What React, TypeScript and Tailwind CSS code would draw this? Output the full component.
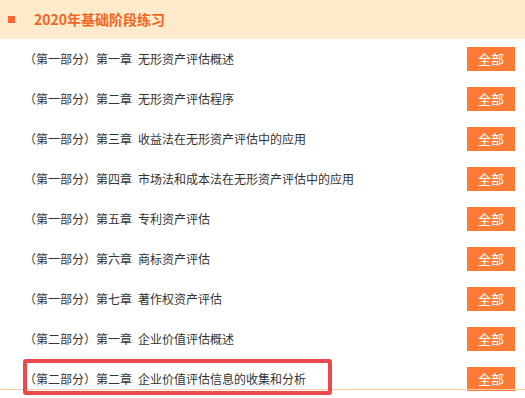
const chapters = [
  { part: '（第一部分）第一章', title: '无形资产评估概述' },
  { part: '（第一部分）第二章', title: '无形资产评估程序' },
  { part: '（第一部分）第三章', title: '收益法在无形资产评估中的应用' },
  { part: '（第一部分）第四章', title: '市场法和成本法在无形资产评估中的应用' },
  { part: '（第一部分）第五章', title: '专利资产评估' },
  { part: '（第一部分）第六章', title: '商标资产评估' },
  { part: '（第一部分）第七章', title: '著作权资产评估' },
  { part: '（第二部分）第一章', title: '企业价值评估概述' },
  { part: '（第二部分）第二章', title: '企业价值评估信息的收集和分析' },
];

const font = { fontFamily: '"Noto Sans CJK SC", "Liberation Sans", sans-serif' };

export default function App() {
  return (
    <div className="relative w-[525px] h-[398px] overflow-hidden bg-white" style={font}>
      <div className="flex items-center h-[39px] bg-[#ffebcb]">
        <span className="ml-2 w-[7px] h-[7px] bg-[#ff6633]" />
        <span className="ml-[19px] text-[14px] font-bold text-[#f26522]">2020年基础阶段练习</span>
      </div>

      <ul>
        {chapters.map((c, i) => (
          <li key={i} className="flex items-center justify-between h-10 pl-6 pr-[10px]">
            <span className="text-[12px] text-[#333]">
              {c.part}
              <span className="ml-[6px]">{c.title}</span>
            </span>
            <button className="w-12 h-6 bg-[#fe7a35] text-white text-[13px] leading-6">全部</button>
          </li>
        ))}
      </ul>

      {/* bottom rule of the list */}
      <div className="absolute left-0 right-0 top-[389px] h-px bg-[#ffcaa4]" />

      {/* highlight annotation */}
      <div className="absolute left-[23px] top-[359px] w-[309px] h-[36px] border-4 border-[#ec4850] rounded-[3px]" />
    </div>
  );
}
